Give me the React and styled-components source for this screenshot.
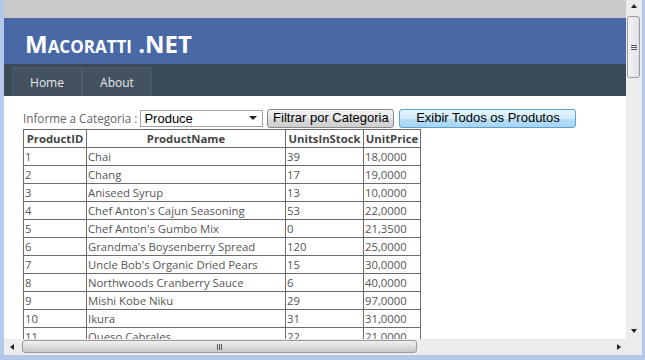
import React from "react";
import styled, { createGlobalStyle } from "styled-components";

const GlobalStyle = createGlobalStyle`
  html, body {
    margin: 0;
    padding: 0;
    overflow: hidden;
  }
`;

// janela do navegador //

const Window = styled.div`
  width: 645px;
  height: 360px;
  display: grid;
  grid-template-columns: 4px 622px 16px 3px;
  grid-template-rows: 339px 16px 5px;
  background-color: #b4c8ec;
`;

const Viewport = styled.div`
  grid-column: 2;
  grid-row: 1;
  display: flex;
  flex-direction: column;
  overflow: hidden;
  background-color: white;
  font-family: "Open Sans", "DejaVu Sans", sans-serif;
`;

const TopBand = styled.div`
  height: 18px;
  flex: none;
  background-color: #c9c9c9;
  background-image: radial-gradient(#b4b4b4 0.6px, transparent 0.7px);
  background-size: 2px 2px;
`;

const Header = styled.div`
  height: 46px;
  flex: none;
  background-color: #4869a6;
  display: flex;
  align-items: center;
  padding-left: 21px;
`;

const Logo = styled.h1`
  margin: 0;
  margin-top: 4px;
  color: white;
  font-family: "Open Sans", "DejaVu Sans", sans-serif;
  font-weight: 700;
  font-size: 24px;
  font-variant: small-caps;
`;

const Nav = styled.div`
  height: 32px;
  flex: none;
  background-color: #3a4a57;
  display: flex;
  align-items: flex-end;
  padding-left: 8px;
  box-sizing: border-box;
`;

const NavItem = styled.a`
  width: 70px;
  height: 29px;
  box-sizing: border-box;
  background-color: #44525f;
  border: 1px solid #4e5c6a;
  border-bottom: none;
  color: #e4e8ee;
  font-size: 12px;
  display: flex;
  align-items: center;
  justify-content: center;
  padding-top: 1px;
`;

const Content = styled.div`
  padding: 12px 0 0 19px;
  display: flex;
  flex-direction: column;
  align-items: flex-start;
`;

const FilterRow = styled.div`
  display: flex;
  align-items: center;
  height: 20px;
  margin-bottom: 1px;
`;

const Label = styled.span`
  color: #666;
  font-size: 11.7px;
  margin-right: 3px;
`;

const FakeSelect = styled.div`
  width: 123px;
  height: 17px;
  box-sizing: border-box;
  border: 1px solid #a5a5a5;
  display: flex;
  align-items: center;
  justify-content: space-between;
  padding: 0 5px 0 3px;
  font-family: "Liberation Sans", Arial, sans-serif;
  font-size: 13px;
  color: #000;
  margin-right: 4px;
`;

const Arrow = styled.span`
  width: 0;
  height: 0;
  border-left: 4px solid transparent;
  border-right: 4px solid transparent;
  border-top: 4px solid #222;
`;

const Button = styled.button`
  height: 19px;
  width: ${(p) => p.$width};
  box-sizing: border-box;
  margin-right: 5px;
  border: 1px solid ${(p) => (p.$blue ? "#5f9fcf" : "#8a8a8a")};
  border-radius: 3px;
  background: ${(p) =>
    p.$blue
      ? "linear-gradient(#e6f4fc 0%, #d0ebfa 50%, #b5ddf5 51%, #a8d6f2 100%)"
      : "linear-gradient(#f2f2f2 0%, #e6e6e6 50%, #d8d8d8 51%, #cfcfcf 100%)"};
  font-family: "Liberation Sans", Arial, sans-serif;
  font-size: 13px;
  color: #000;
  padding: 0;
  line-height: 16px;
`;

const Grid = styled.table`
  border-collapse: collapse;
  border: 1px solid #6c6c6c;
  font-size: 11.3px;
  color: #555;
  table-layout: fixed;
  width: 393px;
`;

const Th = styled.th`
  border: 1px solid #6c6c6c;
  height: 17px;
  padding: 0;
  color: #444;
  font-weight: 700;
  text-align: center;
  width: ${(p) => p.$width};
  white-space: nowrap;
  overflow: hidden;
`;

const Td = styled.td`
  border: 1px solid #6c6c6c;
  height: 17px;
  padding: 0 0 0 1px;
  line-height: 16px;
  white-space: nowrap;
  overflow: hidden;
`;

// barras de rolagem //

const VScroll = styled.div`
  grid-column: 3;
  grid-row: 1;
  background-color: #ececec;
  background-image: radial-gradient(#d4d4d4 0.6px, transparent 0.7px);
  background-size: 2px 2px;
  display: flex;
  flex-direction: column;
  align-items: center;
  justify-content: space-between;
  padding: 4px 0 6px;
  box-sizing: border-box;
  position: relative;
`;

const VThumb = styled.div`
  position: absolute;
  top: 16px;
  left: 1px;
  width: 13px;
  height: 62px;
  box-sizing: border-box;
  border: 1px solid #9a9a9a;
  border-radius: 3px;
  background: linear-gradient(90deg, #f4f4f4, #e0e0e8);
  display: flex;
  flex-direction: column;
  align-items: center;
  justify-content: center;
  gap: 1px;
`;

const Grip = styled.span`
  width: ${(p) => (p.$h ? "1px" : "6px")};
  height: ${(p) => (p.$h ? "6px" : "1px")};
  background-color: #555;
`;

const HScroll = styled.div`
  grid-column: 2;
  grid-row: 2;
  background-color: #ececec;
  background-image: radial-gradient(#d4d4d4 0.6px, transparent 0.7px);
  background-size: 2px 2px;
  display: flex;
  align-items: center;
  justify-content: space-between;
  padding: 0 5px 0 6px;
  box-sizing: border-box;
  position: relative;
`;

const HThumb = styled.div`
  position: absolute;
  left: 18px;
  top: 1px;
  width: 395px;
  height: 13px;
  box-sizing: border-box;
  border: 1px solid #9a9a9a;
  border-radius: 3px;
  background: linear-gradient(#f0f0f0, #c8c8c8);
  display: flex;
  align-items: center;
  justify-content: center;
  gap: 1px;
`;

const Corner = styled.div`
  grid-column: 3;
  grid-row: 2;
  background-color: #ececec;
`;

const Tri = styled.span`
  width: 0;
  height: 0;
  border: 3px solid transparent;
  ${(p) => p.$dir === "up" && "border-bottom: 4px solid #222; border-top: none;"}
  ${(p) => p.$dir === "down" && "border-top: 4px solid #222; border-bottom: none;"}
  ${(p) => p.$dir === "left" && "border-right: 4px solid #222; border-left: none;"}
  ${(p) => p.$dir === "right" && "border-left: 4px solid #222; border-right: none;"}
`;

const products = [
  [1, "Chai", 39, "18,0000"],
  [2, "Chang", 17, "19,0000"],
  [3, "Aniseed Syrup", 13, "10,0000"],
  [4, "Chef Anton's Cajun Seasoning", 53, "22,0000"],
  [5, "Chef Anton's Gumbo Mix", 0, "21,3500"],
  [6, "Grandma's Boysenberry Spread", 120, "25,0000"],
  [7, "Uncle Bob's Organic Dried Pears", 15, "30,0000"],
  [8, "Northwoods Cranberry Sauce", 6, "40,0000"],
  [9, "Mishi Kobe Niku", 29, "97,0000"],
  [10, "Ikura", 31, "31,0000"],
  [11, "Queso Cabrales", 22, "21,0000"],
  [12, "Queso Manchego La Pastora", 86, "38,0000"],
];

function App() {
  return (
    <>
      <GlobalStyle />
      <Window>
        <div />
        <Viewport>
          <TopBand />
          <Header>
            <Logo>Macoratti .NET</Logo>
          </Header>
          <Nav>
            <NavItem>Home</NavItem>
            <NavItem>About</NavItem>
          </Nav>
          <Content>
            <FilterRow>
              <Label>Informe a Categoria :</Label>
              <FakeSelect>
                Produce
                <Arrow />
              </FakeSelect>
              <Button $width="127px">Filtrar por Categoria</Button>
              <Button $width="177px" $blue>
                Exibir Todos os Produtos
              </Button>
            </FilterRow>
            <Grid>
              <thead>
                <tr>
                  <Th $width="62px">ProductID</Th>
                  <Th $width="198px">ProductName</Th>
                  <Th $width="77px">UnitsInStock</Th>
                  <Th $width="56px">UnitPrice</Th>
                </tr>
              </thead>
              <tbody>
                {products.map((p) => (
                  <tr key={p[0]}>
                    <Td>{p[0]}</Td>
                    <Td>{p[1]}</Td>
                    <Td>{p[2]}</Td>
                    <Td>{p[3]}</Td>
                  </tr>
                ))}
              </tbody>
            </Grid>
          </Content>
        </Viewport>
        <VScroll>
          <Tri $dir="up" />
          <VThumb>
            <Grip />
            <Grip />
            <Grip />
          </VThumb>
          <Tri $dir="down" />
        </VScroll>
        <div />
        <div />
        <HScroll>
          <Tri $dir="left" />
          <HThumb>
            <Grip $h />
            <Grip $h />
            <Grip $h />
          </HThumb>
          <Tri $dir="right" />
        </HScroll>
        <Corner />
      </Window>
    </>
  );
}

export default App;
